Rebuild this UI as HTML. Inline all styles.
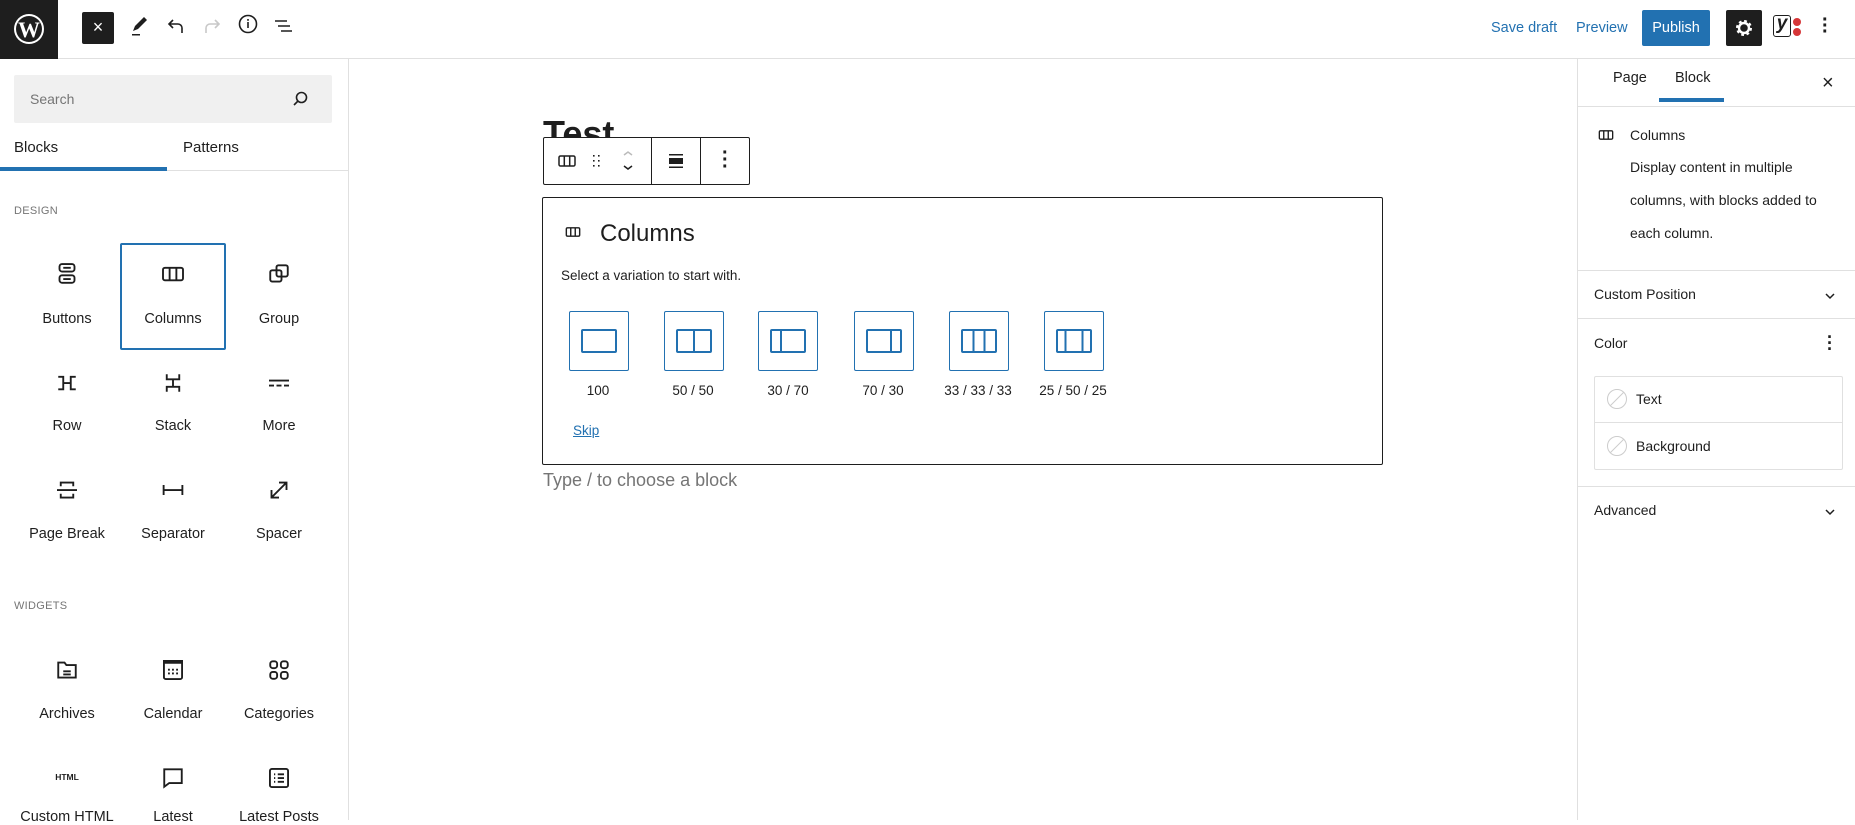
<!DOCTYPE html>
<html><head><meta charset="utf-8">
<style>
*{margin:0;padding:0;box-sizing:border-box}
body{width:1855px;height:820px;overflow:hidden;background:#fff;font-family:"Liberation Sans",sans-serif;color:#1e1e1e;position:relative;font-size:15px}
.a{position:absolute}
.c{position:absolute;transform:translateX(-50%);white-space:nowrap;text-align:center}
svg{display:block}
.lbl{font-size:14.5px;color:#1e1e1e}
.var{position:absolute;top:311px;width:60px;height:60px;border:1.5px solid #2271b1;border-radius:2px}
.var svg{position:absolute;left:10px;top:14px}
.vl{position:absolute;top:383px;font-size:13.5px;transform:translateX(-50%);white-space:nowrap}
.hr{position:absolute;height:1px;background:#e0e0e0}
.ic{position:absolute;width:30px;height:30px}
</style></head><body>
<!-- top bar -->
<div class="a" style="left:0;top:0;width:1855px;height:59px;border-bottom:1px solid #e0e0e0"></div>
<div class="a" style="left:0;top:0;width:58px;height:59px;background:#1e1e1e">
<svg width="34" height="34" viewBox="0 0 34 34" style="margin:12px"><circle cx="17" cy="17" r="15" fill="#fff"/><circle cx="17" cy="17" r="13" fill="#1e1e1e"/><text x="17" y="25" font-family="Liberation Serif" font-weight="bold" font-size="22" fill="#fff" text-anchor="middle">W</text></svg></div>
<div class="a" style="left:82px;top:12px;width:32px;height:32px;background:#1e1e1e;border-radius:2px;color:#fff;font-size:18px;text-align:center;line-height:31px">×</div>
<svg class="a" style="left:128px;top:14px" width="24" height="24" viewBox="0 0 24 24"><path d="M5 17l2-5 9-9 3 3-9 9z" fill="#1e1e1e"/><rect x="4" y="20" width="8" height="1.5" fill="#1e1e1e"/></svg>
<svg class="a" style="left:164px;top:14px" width="24" height="24" viewBox="0 0 24 24"><path d="M18 19v-5a4 4 0 0 0-4-4H5M9 6l-4 4 4 4" fill="none" stroke="#1e1e1e" stroke-width="1.6"/></svg>
<svg class="a" style="left:200px;top:14px" width="24" height="24" viewBox="0 0 24 24"><path d="M6 19v-5a4 4 0 0 1 4-4h9M15 6l4 4-4 4" fill="none" stroke="#c8c8c8" stroke-width="1.6"/></svg>
<svg class="a" style="left:236px;top:12px" width="24" height="24" viewBox="0 0 24 24"><circle cx="12" cy="12" r="8.5" fill="none" stroke="#1e1e1e" stroke-width="1.6"/><rect x="11.2" y="10" width="1.6" height="6" fill="#1e1e1e"/><rect x="11.2" y="7" width="1.6" height="1.8" fill="#1e1e1e"/></svg>
<svg class="a" style="left:272px;top:14px" width="24" height="24" viewBox="0 0 24 24"><path d="M3 7h12M6 12h12M9 17h11" stroke="#1e1e1e" stroke-width="1.6"/></svg>
<div class="a" style="left:1491px;top:20px;color:#2271b1;font-size:14.5px">Save draft</div>
<div class="a" style="left:1576px;top:20px;color:#2271b1;font-size:14.5px">Preview</div>
<div class="a" style="left:1642px;top:10px;width:68px;height:36px;background:#2271b1;color:#fff;border-radius:2px;font-size:14.5px;text-align:center;line-height:36px">Publish</div>
<div class="a" style="left:1726px;top:10px;width:36px;height:36px;background:#1e1e1e;border-radius:2px">
<svg width="36" height="36" viewBox="0 0 36 36"><circle cx="18" cy="18" r="6" fill="none" stroke="#fff" stroke-width="4" stroke-dasharray="2.4 2.3"/><circle cx="18" cy="18" r="5" fill="none" stroke="#fff" stroke-width="2.4"/></svg></div>
<div class="a" style="left:1773px;top:15px;width:18px;height:22px;border:1.5px solid #1e1e1e;border-radius:3px;font-weight:bold;font-size:19px;line-height:16px;text-align:center;font-style:italic">y</div>
<div class="a" style="left:1793px;top:18px;width:8px;height:8px;border-radius:50%;background:#d63638"></div>
<div class="a" style="left:1793px;top:28px;width:8px;height:8px;border-radius:50%;background:#d63638"></div>
<div class="a" style="left:1822px;top:17px;font-size:20px;line-height:6px;font-weight:bold">·<br>·<br>·</div>

<!-- left sidebar -->
<div class="a" style="left:348px;top:59px;width:1px;height:761px;background:#e0e0e0"></div>
<div class="a" style="left:14px;top:75px;width:318px;height:48px;background:#f0f0f0;border-radius:2px"></div>
<div class="a" style="left:30px;top:91px;color:#757575;font-size:14px">Search</div>
<svg class="a" style="left:290px;top:89px" width="20" height="20" viewBox="0 0 20 20"><circle cx="11.5" cy="8.5" r="5" fill="none" stroke="#1e1e1e" stroke-width="1.6"/><path d="M8 12l-4 4" stroke="#1e1e1e" stroke-width="1.6"/></svg>
<div class="a" style="left:14px;top:139px;font-size:15px;font-weight:500">Blocks</div>
<div class="a" style="left:183px;top:139px;font-size:15px">Patterns</div>
<div class="hr" style="left:0;top:170px;width:348px"></div>
<div class="a" style="left:0;top:167px;width:167px;height:4px;background:#2271b1"></div>
<div class="a" style="left:14px;top:205px;font-size:11px;color:#757575;letter-spacing:.3px">DESIGN</div>
<div class="a" style="left:120px;top:243px;width:106px;height:107px;border:2px solid #2271b1;border-radius:2px"></div>

<!-- row1 icons -->
<svg class="ic" style="left:52px;top:259px" viewBox="0 0 24 24" fill="none" stroke="#1e1e1e" stroke-width="1.5"><rect x="6" y="4" width="12" height="6" rx="2"/><rect x="6" y="13" width="12" height="6" rx="2"/><path d="M9 7h6M9 16h6"/></svg>
<svg class="ic" style="left:158px;top:259px" viewBox="0 0 24 24" fill="none" stroke="#1e1e1e" stroke-width="1.5"><rect x="4" y="7" width="16" height="10" rx="1.5"/><path d="M9.3 7v10M14.7 7v10"/></svg>
<svg class="ic" style="left:264px;top:259px" viewBox="0 0 24 24" fill="none" stroke="#1e1e1e" stroke-width="1.5"><rect x="5" y="9" width="9" height="9" rx="1.5"/><rect x="10" y="5" width="9" height="9" rx="1.5"/></svg>
<div class="c lbl" style="left:67px;top:311px">Buttons</div>
<div class="c lbl" style="left:173px;top:311px">Columns</div>
<div class="c lbl" style="left:279px;top:311px">Group</div>
<!-- row2 -->
<svg class="ic" style="left:52px;top:368px" viewBox="0 0 24 24" fill="none" stroke="#1e1e1e" stroke-width="1.5"><path d="M5 7h4v10H5M19 7h-4v10h4M9 12h6"/></svg>
<svg class="ic" style="left:158px;top:368px" viewBox="0 0 24 24" fill="none" stroke="#1e1e1e" stroke-width="1.5"><path d="M7 5v4h10V5M7 19v-4h10v4M12 9v6" /></svg>
<svg class="ic" style="left:264px;top:368px" viewBox="0 0 24 24" fill="none" stroke="#1e1e1e" stroke-width="1.5"><path d="M4 10h16M4 14h4M10 14h4M16 14h4"/></svg>
<div class="c lbl" style="left:67px;top:418px">Row</div>
<div class="c lbl" style="left:173px;top:418px">Stack</div>
<div class="c lbl" style="left:279px;top:418px">More</div>
<!-- row3 -->
<svg class="ic" style="left:52px;top:475px" viewBox="0 0 24 24" fill="none" stroke="#1e1e1e" stroke-width="1.5"><path d="M7 9V6h10v3M7 15v3h10v-3M4 12h16"/></svg>
<svg class="ic" style="left:158px;top:475px" viewBox="0 0 24 24" fill="none" stroke="#1e1e1e" stroke-width="1.5"><path d="M4.5 8v8M19.5 8v8M4.5 12h15"/></svg>
<svg class="ic" style="left:264px;top:475px" viewBox="0 0 24 24" fill="none" stroke="#1e1e1e" stroke-width="1.5"><path d="M6 18L18 6M12 6h6v6M6 12v6h6"/></svg>
<div class="c lbl" style="left:67px;top:526px">Page Break</div>
<div class="c lbl" style="left:173px;top:526px">Separator</div>
<div class="c lbl" style="left:279px;top:526px">Spacer</div>
<div class="a" style="left:14px;top:600px;font-size:11px;color:#757575;letter-spacing:.3px">WIDGETS</div>
<!-- row4 -->
<svg class="ic" style="left:52px;top:655px" viewBox="0 0 24 24" fill="none" stroke="#1e1e1e" stroke-width="1.5"><path d="M5 6h5l1.5 2H19v10H5z"/><path d="M9 13h6M9 15.5h6"/></svg>
<svg class="ic" style="left:158px;top:655px" viewBox="0 0 24 24"><rect x="4.75" y="4.75" width="14.5" height="14.5" rx="1.5" fill="none" stroke="#1e1e1e" stroke-width="1.5"/><rect x="4" y="4" width="16" height="3" fill="#1e1e1e"/><g fill="#1e1e1e"><rect x="8" y="11" width="1.5" height="1.5"/><rect x="11.2" y="11" width="1.5" height="1.5"/><rect x="14.5" y="11" width="1.5" height="1.5"/><rect x="8" y="14" width="1.5" height="1.5"/><rect x="11.2" y="14" width="1.5" height="1.5"/><rect x="14.5" y="14" width="1.5" height="1.5"/></g></svg>
<svg class="ic" style="left:264px;top:655px" viewBox="0 0 24 24" fill="none" stroke="#1e1e1e" stroke-width="1.5"><rect x="5" y="5" width="5.5" height="5.5" rx="2"/><rect x="13.5" y="5" width="5.5" height="5.5" rx="2"/><rect x="5" y="13.5" width="5.5" height="5.5" rx="2"/><rect x="13.5" y="13.5" width="5.5" height="5.5" rx="2"/></svg>
<div class="c lbl" style="left:67px;top:706px">Archives</div>
<div class="c lbl" style="left:173px;top:706px">Calendar</div>
<div class="c lbl" style="left:279px;top:706px">Categories</div>
<!-- row5 -->
<div class="c" style="left:67px;top:772px;font-size:8.5px;font-weight:bold">HTML</div>
<svg class="ic" style="left:158px;top:763px" viewBox="0 0 24 24" fill="none" stroke="#1e1e1e" stroke-width="1.5"><path d="M5 5h14v11H9l-4 3z"/></svg>
<svg class="ic" style="left:264px;top:763px" viewBox="0 0 24 24" fill="none" stroke="#1e1e1e" stroke-width="1.5"><rect x="4.75" y="4.75" width="14.5" height="14.5" rx="1.5"/><path d="M8 9h1M11 9h5M8 12h1M11 12h5M8 15h1M11 15h5"/></svg>
<div class="c lbl" style="left:67px;top:809px">Custom HTML</div>
<div class="c lbl" style="left:173px;top:809px">Latest</div>
<div class="c lbl" style="left:279px;top:809px">Latest Posts</div>

<!-- editor -->
<div class="a" style="left:543px;top:112px;font-size:36px;font-weight:bold;height:25px;overflow:hidden;line-height:44px">Test</div>
<div class="a" style="left:543px;top:137px;width:207px;height:48px;border:1px solid #1e1e1e;border-radius:2px;background:#fff"></div>
<div class="a" style="left:651px;top:137px;width:1px;height:48px;background:#1e1e1e"></div>
<div class="a" style="left:700px;top:137px;width:1px;height:48px;background:#1e1e1e"></div>
<svg class="a" style="left:555px;top:149px" width="24" height="24" viewBox="0 0 24 24" fill="none" stroke="#1e1e1e" stroke-width="1.5"><rect x="4" y="7" width="16" height="10" rx="1.5"/><path d="M9.3 7v10M14.7 7v10"/></svg>
<svg class="a" style="left:585px;top:149px" width="24" height="24" viewBox="0 0 24 24" fill="#1e1e1e"><rect x="8" y="6" width="1.6" height="1.6"/><rect x="13" y="6" width="1.6" height="1.6"/><rect x="8" y="11" width="1.6" height="1.6"/><rect x="13" y="11" width="1.6" height="1.6"/><rect x="8" y="16" width="1.6" height="1.6"/><rect x="13" y="16" width="1.6" height="1.6"/></svg>
<svg class="a" style="left:616px;top:147px" width="24" height="28" viewBox="0 0 24 28" fill="none" stroke-width="1.5"><path d="M8 8l4-3 4 3" stroke="#bbb"/><path d="M8 19l4 3 4-3" stroke="#1e1e1e"/></svg>
<svg class="a" style="left:664px;top:149px" width="24" height="24" viewBox="0 0 24 24"><rect x="5" y="5" width="14" height="1.5" fill="#1e1e1e"/><rect x="5" y="9" width="14" height="6" fill="#1e1e1e"/><rect x="5" y="17.5" width="14" height="1.5" fill="#1e1e1e"/></svg>
<div class="a" style="left:722px;top:150px;font-size:20px;line-height:7px;font-weight:bold">·<br>·<br>·</div>

<div class="a" style="left:542px;top:197px;width:841px;height:268px;border:1px solid #1e1e1e;border-radius:2px"></div>
<svg class="a" style="left:563px;top:222px" width="20" height="20" viewBox="0 0 24 24" fill="none" stroke="#1e1e1e" stroke-width="1.7"><rect x="4" y="7" width="16" height="10" rx="1.5"/><path d="M9.3 7v10M14.7 7v10"/></svg>
<div class="a" style="left:600px;top:220px;font-size:24px">Columns</div>
<div class="a" style="left:561px;top:268px;font-size:13.5px">Select a variation to start with.</div>
<div class="var" style="left:569px"><svg width="38" height="30" viewBox="0 0 38 30"><rect x="2" y="4" width="34" height="22" rx="1" fill="none" stroke="#2271b1" stroke-width="2"/></svg></div>
<div class="var" style="left:664px"><svg width="38" height="30" viewBox="0 0 38 30" fill="none" stroke="#2271b1" stroke-width="2"><rect x="2" y="4" width="34" height="22" rx="1"/><path d="M19 4v22"/></svg></div>
<div class="var" style="left:758px"><svg width="38" height="30" viewBox="0 0 38 30" fill="none" stroke="#2271b1" stroke-width="2"><rect x="2" y="4" width="34" height="22" rx="1"/><path d="M12 4v22"/></svg></div>
<div class="var" style="left:854px"><svg width="38" height="30" viewBox="0 0 38 30" fill="none" stroke="#2271b1" stroke-width="2"><rect x="2" y="4" width="34" height="22" rx="1"/><path d="M26 4v22"/></svg></div>
<div class="var" style="left:949px"><svg width="38" height="30" viewBox="0 0 38 30" fill="none" stroke="#2271b1" stroke-width="2"><rect x="2" y="4" width="34" height="22" rx="1"/><path d="M13.5 4v22M24.5 4v22"/></svg></div>
<div class="var" style="left:1044px"><svg width="38" height="30" viewBox="0 0 38 30" fill="none" stroke="#2271b1" stroke-width="2"><rect x="2" y="4" width="34" height="22" rx="1"/><path d="M10.5 4v22M27.5 4v22"/></svg></div>
<div class="vl" style="left:598px">100</div>
<div class="vl" style="left:693px">50 / 50</div>
<div class="vl" style="left:788px">30 / 70</div>
<div class="vl" style="left:883px">70 / 30</div>
<div class="vl" style="left:978px">33 / 33 / 33</div>
<div class="vl" style="left:1073px">25 / 50 / 25</div>
<div class="a" style="left:573px;top:423px;font-size:13.5px;color:#2271b1;text-decoration:underline">Skip</div>
<div class="a" style="left:543px;top:470px;font-size:18px;color:#757575">Type / to choose a block</div>

<!-- right sidebar -->
<div class="a" style="left:1577px;top:59px;width:1px;height:761px;background:#e0e0e0"></div>
<div class="a" style="left:1613px;top:70px;font-size:14.5px">Page</div>
<div class="a" style="left:1675px;top:70px;font-size:14.5px">Block</div>
<div class="a" style="left:1659px;top:98px;width:65px;height:4px;background:#2271b1"></div>
<div class="hr" style="left:1578px;top:106px;width:277px"></div>
<div class="a" style="left:1822px;top:72px;font-size:20px">×</div>
<svg class="a" style="left:1596px;top:125px" width="20" height="20" viewBox="0 0 24 24" fill="none" stroke="#1e1e1e" stroke-width="1.6"><rect x="4" y="7" width="16" height="10" rx="1.5"/><path d="M9.3 7v10M14.7 7v10"/></svg>
<div class="a" style="left:1630px;top:127px;font-size:14px;font-weight:500">Columns</div>
<div class="a" style="left:1630px;top:151px;font-size:14px;line-height:33px">Display content in multiple<br>columns, with blocks added to<br>each column.</div>
<div class="hr" style="left:1578px;top:270px;width:277px"></div>
<div class="a" style="left:1594px;top:286px;font-size:14px;font-weight:500">Custom Position</div>
<svg class="a" style="left:1822px;top:288px" width="16" height="16" viewBox="0 0 16 16"><path d="M4 6l4 4 4-4" fill="none" stroke="#1e1e1e" stroke-width="1.5"/></svg>
<div class="hr" style="left:1578px;top:318px;width:277px"></div>
<div class="a" style="left:1594px;top:335px;font-size:14px;font-weight:500">Color</div>
<div class="a" style="left:1827px;top:334px;font-size:18px;line-height:6px;font-weight:bold">·<br>·<br>·</div>
<div class="a" style="left:1594px;top:376px;width:249px;height:94px;border:1px solid #e0e0e0;border-radius:2px"></div>
<div class="hr" style="left:1595px;top:422px;width:247px"></div>
<svg class="a" style="left:1606px;top:388px" width="22" height="22" viewBox="0 0 22 22"><circle cx="11" cy="11" r="9.5" fill="none" stroke="#ccc"/><path d="M4.5 17.5L17.5 4.5" stroke="#ccc"/></svg>
<svg class="a" style="left:1606px;top:435px" width="22" height="22" viewBox="0 0 22 22"><circle cx="11" cy="11" r="9.5" fill="none" stroke="#ccc"/><path d="M4.5 17.5L17.5 4.5" stroke="#ccc"/></svg>
<div class="a" style="left:1636px;top:391px;font-size:14px">Text</div>
<div class="a" style="left:1636px;top:438px;font-size:14px">Background</div>
<div class="hr" style="left:1578px;top:486px;width:277px"></div>
<div class="a" style="left:1594px;top:502px;font-size:14px;font-weight:500">Advanced</div>
<svg class="a" style="left:1822px;top:504px" width="16" height="16" viewBox="0 0 16 16"><path d="M4 6l4 4 4-4" fill="none" stroke="#1e1e1e" stroke-width="1.5"/></svg>
</body></html>
